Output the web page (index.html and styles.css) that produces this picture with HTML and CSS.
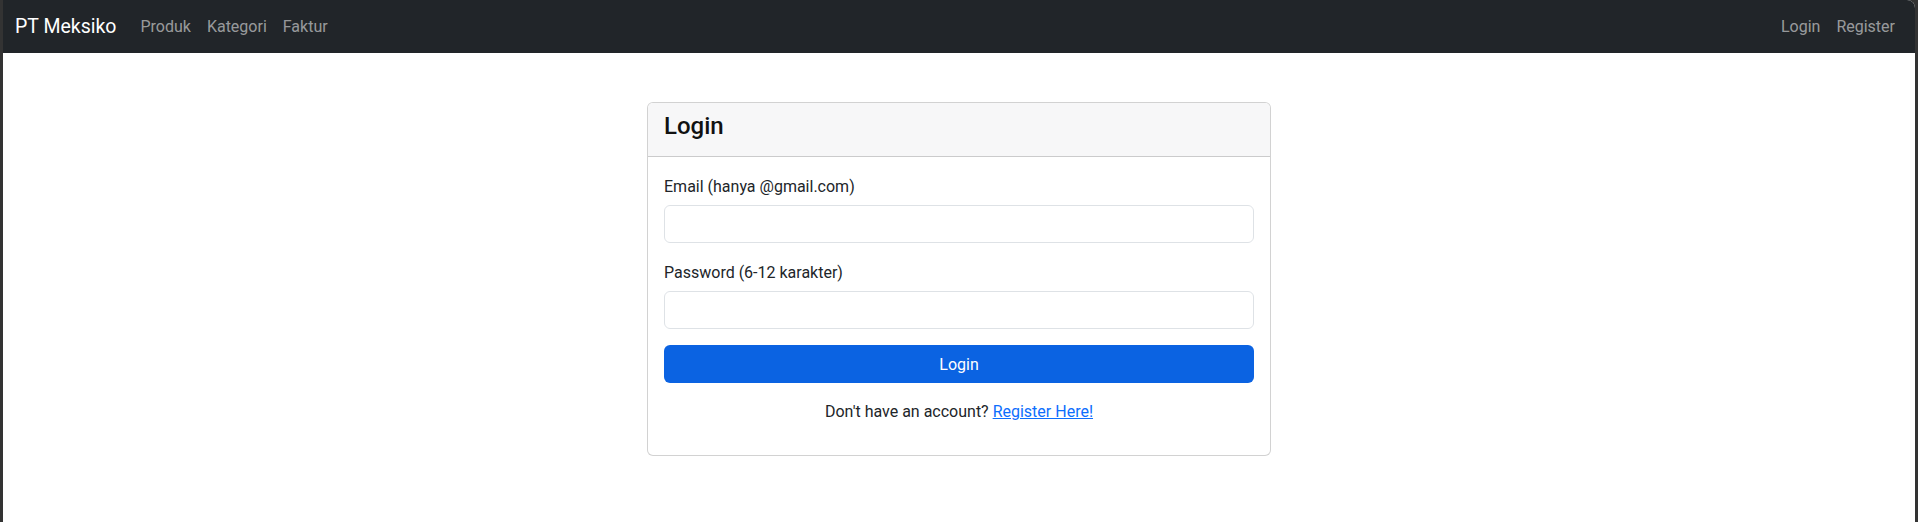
FILE: index.html
```html
<!DOCTYPE html>
<html lang="id">
<head>
<meta charset="utf-8">
<title>Login - PT Meksiko</title>
<link rel="stylesheet" href="styles.css">
</head>
<body>
<div class="window">
  <nav class="navbar">
    <div class="nav-left">
      <a class="brand" href="#">PT Meksiko</a>
      <a class="nav-link" href="#">Produk</a>
      <a class="nav-link" href="#">Kategori</a>
      <a class="nav-link" href="#">Faktur</a>
    </div>
    <div class="nav-right">
      <a class="nav-link" href="#">Login</a>
      <a class="nav-link" href="#">Register</a>
    </div>
  </nav>
  <main class="main">
    <div class="card">
      <div class="card-header">
        <h4 class="card-title">Login</h4>
      </div>
      <form class="card-body">
        <div class="field">
          <label class="label" for="email">Email (hanya @gmail.com)</label>
          <input class="input" id="email" type="email">
        </div>
        <div class="field">
          <label class="label" for="password">Password (6-12 karakter)</label>
          <input class="input" id="password" type="password">
        </div>
        <button class="btn" type="button">Login</button>
        <p class="register-text">Don't have an account? <a class="link" href="#">Register Here!</a></p>
      </form>
    </div>
  </main>
</div>
</body>
</html>
```
FILE: styles.css
```css
* { box-sizing: border-box; }
html, body { height: 100%; }
body {
  margin: 0;
  background: #333333;
  font-family: "Segoe UI", Roboto, "Liberation Sans", sans-serif;
  font-size: 16px;
  line-height: 1.5;
  color: #212529;
}
.window {
  margin: 0 3px;
  height: 100%;
  background: #ffffff;
  border-top-right-radius: 8px;
  overflow: hidden;
  display: flex;
  flex-direction: column;
}
.navbar {
  height: 53px;
  flex: none;
  background: #212529;
  display: flex;
  align-items: center;
  justify-content: space-between;
  padding: 0 12px 0 12px;
}
.nav-left, .nav-right {
  display: flex;
  align-items: center;
}
.brand {
  color: #ffffff;
  font-size: 19.5px;
  line-height: 30px;
  text-decoration: none;
  margin-right: 16px;
}
.nav-link {
  color: rgba(255, 255, 255, 0.55);
  text-decoration: none;
  padding: 8px;
  line-height: 24px;
}
.main {
  flex: 1;
  display: flex;
  justify-content: center;
  align-items: flex-start;
  padding-top: 49px;
}
.card {
  width: 624px;
  border: 1px solid rgba(0, 0, 0, 0.175);
  border-radius: 6px;
  background: #ffffff;
  overflow: hidden;
}
.card-header {
  background: #f7f7f8;
  border-bottom: 1px solid rgba(0, 0, 0, 0.175);
  padding: 8px 16px;
}
.card-title {
  margin: 0 0 7px 0;
  padding-top: 1px;
  font-size: 24px;
  font-weight: 500;
  line-height: 1.2;
  color: #111;
}
.card-body {
  padding: 16px 16px 16px;
  display: flex;
  flex-direction: column;
}
.field {
  display: flex;
  flex-direction: column;
  margin-bottom: 16px;
}
.label {
  padding-top: 2px;
  margin-bottom: 6px;
  line-height: 24px;
}
.input {
  height: 38px;
  border: 1px solid #dee2e6;
  border-radius: 6px;
  padding: 6px 12px;
  font: inherit;
  background: #fff;
}
.btn {
  height: 38px;
  border: none;
  border-radius: 6px;
  background: #0b63e2;
  color: #ffffff;
  font: inherit;
  line-height: 24px;
  padding: 3px 12px 0;
}
.register-text {
  margin: 17px 0 15px;
  text-align: center;
}
.link {
  color: #0d6efd;
  text-decoration: underline;
}
```
